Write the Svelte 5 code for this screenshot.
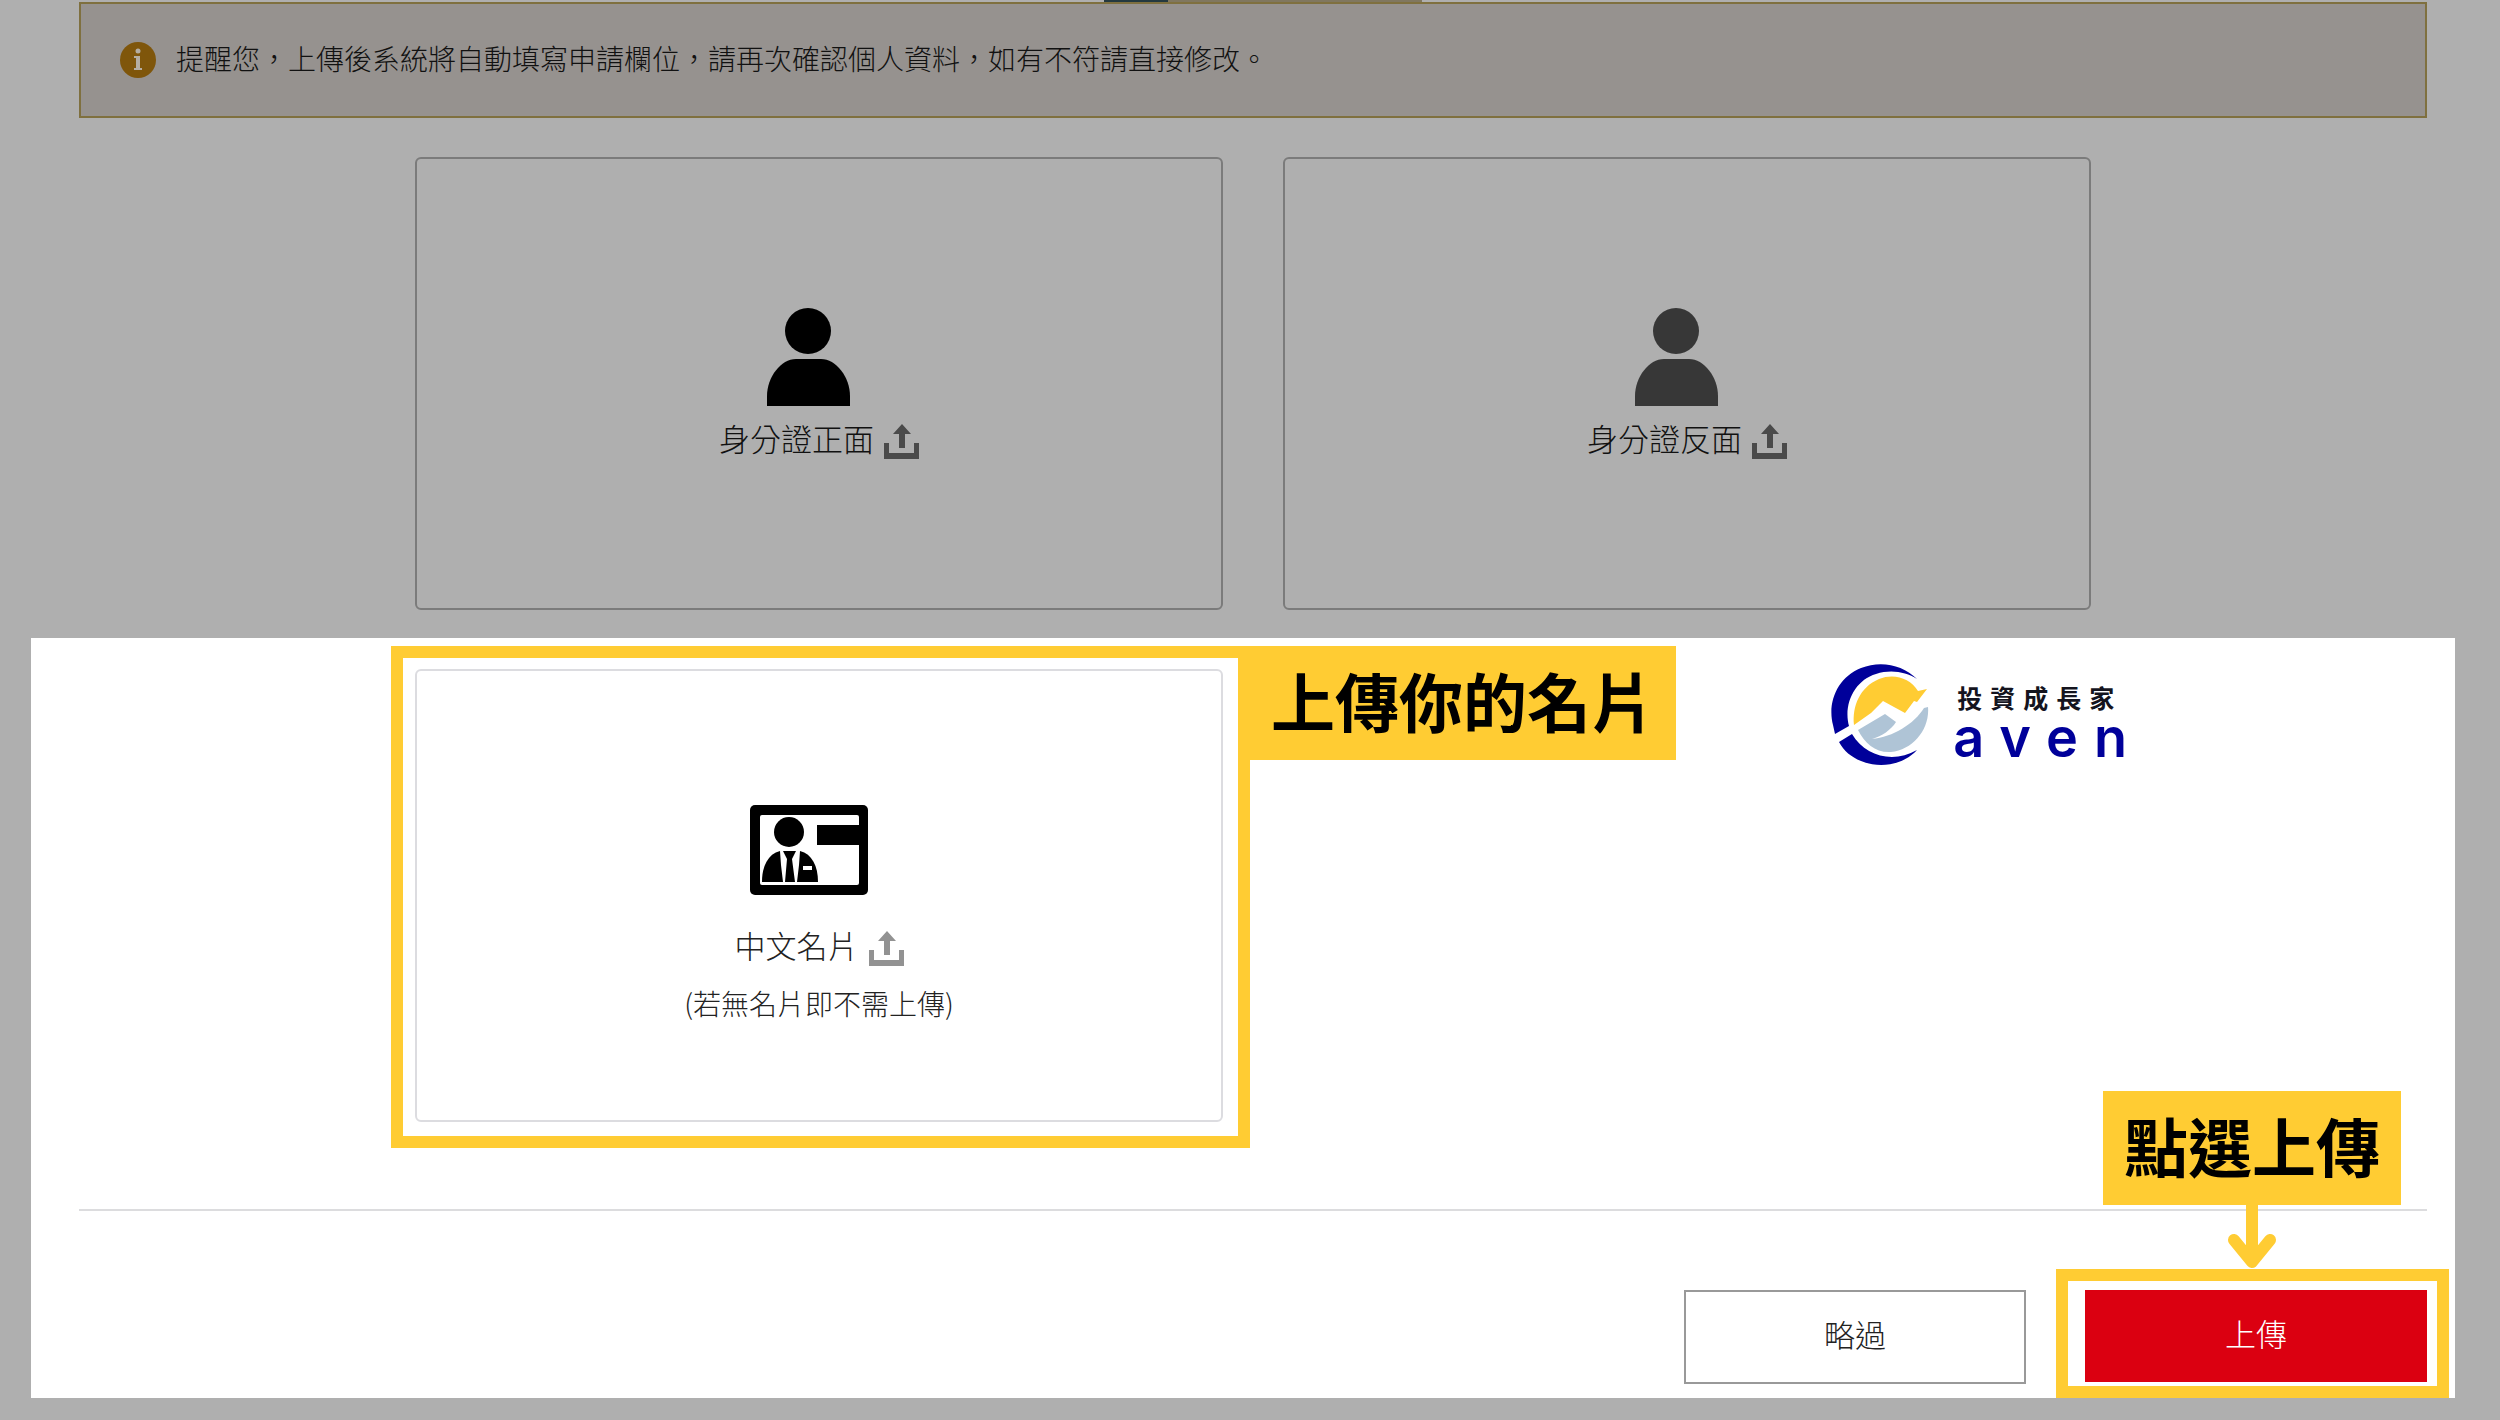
<script>
    let idCards = $state([
        { id: 'front', label: '身分證正面', color: '#000000' },
        { id: 'back', label: '身分證反面', color: '#373737' }
    ]);
</script>

{#snippet uploadIcon()}
    <svg class="upload-icon" viewBox="0 0 35 35" aria-hidden="true">
        <path d="M18 0 L27 10 H21 V24 H15 V10 H9 Z" />
        <path d="M0 19 H5 V29 H30 V19 H35 V35 H0 Z" />
    </svg>
{/snippet}

<main>
    <div class="steps">
        <span class="step active"></span>
        <span class="step"></span>
    </div>

    <div class="notice">
        <svg class="info-icon" viewBox="0 0 36 36" aria-hidden="true">
            <circle cx="18" cy="18" r="18" fill="#7f560b" />
            <circle cx="18" cy="9" r="2.5" fill="#b5aea3" />
            <path d="M14 14 H20 V26 H22 V28 H14 V26 H16 V16 H14 Z" fill="#b5aea3" />
        </svg>
        <p>提醒您，上傳後系統將自動填寫申請欄位，請再次確認個人資料，如有不符請直接修改。</p>
    </div>

    <div class="card-grid dimmed">
        {#each idCards as card (card.id)}
            <button class="card" type="button">
                <svg class="person" viewBox="0 0 104 98" fill={card.color} aria-hidden="true">
                    <circle cx="41" cy="23" r="23" />
                    <path d="M0 98 V88 C0 69 14 51 29 51 H54 C69 51 83 69 83 88 V98 Z" />
                </svg>
                <span class="card-label"><span>{card.label}</span>{@render uploadIcon()}</span>
            </button>
        {/each}
    </div>

    <section class="spotlight">
        <div class="card-grid">
            <div class="highlight">
                <button class="card business" type="button">
                    <svg class="namecard" viewBox="0 0 138 90" aria-hidden="true">
                        <rect width="118" height="90" rx="5" />
                        <rect x="10" y="10" width="99" height="70" rx="2" fill="#fff" />
                        <rect x="67" y="20" width="43" height="20" />
                        <circle cx="39" cy="27" r="15" />
                        <path d="M12 77 C12 61 18 49 30 46 L31 60 L33 77 Z" />
                        <path d="M68 77 C68 61 62 49 50 46 L49 60 L47 77 Z" />
                        <path d="M33 46 H46 L42 54 L45 77 H35 L37 54 Z" />
                        <rect x="53" y="61" width="9" height="4" fill="#fff" />
                    </svg>
                    <span class="card-label"><span>中文名片</span>{@render uploadIcon()}</span>
                    <span class="card-note">(若無名片即不需上傳)</span>
                </button>
                <span class="frame card-frame"></span>
                <strong class="callout card-callout">上傳你的名片</strong>
            </div>
        </div>

        <div class="brand">
            <svg class="brand-mark" viewBox="0 0 98 102" aria-hidden="true">
                <path fill="#00009a" d="M86 15 C72 1 50 -4 30 4 C7 13 -4 38 2 61 L4 70 L18 62 C12 40 24 16 45 10 C60 5 75 8 86 15 Z" />
                <path fill="#00009a" d="M8 78 L21 70 C34 92 62 100 86 86 C72 101 49 105 30 97 C20 93 13 87 8 78 Z" />
                <path fill="#fc3" d="M23 61 C21 42 29 23 48 15 C63 9 79 14 87 27 L96 25 L86 38 L83 37 L74 49 L52 37 L40 49 Z" />
                <path fill="#afc4d6" d="M27 66 L54 50 L65 58 C60 66 51 72 41 75 C62 73 83 60 93 44 L97 43 C99 65 82 86 60 88 C45 89 34 80 27 66 Z" />
            </svg>
            <div class="brand-text">
                <span class="brand-zh">投資成長家</span>
                <span class="brand-en">aven</span>
            </div>
        </div>

        <hr />

        <div class="actions">
            <button class="btn skip" type="button">略過</button>
            <div class="highlight">
                <button class="btn submit" type="button">上傳</button>
                <span class="frame submit-frame"></span>
                <div class="pointer">
                    <strong class="callout">點選上傳</strong>
                    <svg class="arrow" viewBox="0 0 50 64" aria-hidden="true">
                        <path d="M25 0 V54 M7 35 L25 57 L43 35" />
                    </svg>
                </div>
            </div>
        </div>
    </section>
</main>

<style>
    :global(body) { margin: 0; background: #afafaf; color: #111; font-family: "Noto Sans CJK TC", sans-serif; font-weight: 300; }
    button { font: inherit; color: inherit; cursor: pointer; }
    svg { display: block; flex: none; }

    .steps { display: flex; justify-content: center; height: 2px; margin: 0 73px 0 99px; }
    .step { width: 254px; background: #80775f; }
    .step.active { width: 64px; background: #24393f; }

    .notice { display: flex; align-items: flex-start; gap: 20px; box-sizing: border-box; height: 116px; margin: 0 73px 0 79px; padding: 38px 39px 0; border: 2px solid #7f703f; background: #96928f; }
    .notice p { margin: 0; font-size: 28px; line-height: 32px; }
    .info-icon { width: 36px; height: 36px; }

    .card-grid { display: grid; grid-template-columns: 1fr 1fr; gap: 60px; max-width: 1676px; margin: 0 auto; }
    .card-grid.dimmed { padding: 39px 73px 28px 79px; }
    .card { display: flex; flex-direction: column; align-items: center; box-sizing: border-box; width: 100%; min-height: 453px; padding: 149px 0 0; border: 2px solid #7b7b7b; border-radius: 6px; background: none; }
    .card.business { padding-top: 134px; border-color: #dcdce0; color: #222; }
    .card-label { display: flex; align-items: center; gap: 10px; margin-top: 12px; font-size: 31px; line-height: 40px; }
    .card-label span { padding-bottom: 6px; }
    .business .card-label { margin-top: 30px; }
    .card-note { margin-top: 15px; font-size: 28px; line-height: 34px; }
    .person { width: 104px; height: 98px; }
    .namecard { width: 138px; height: 90px; }
    .upload-icon { width: 35px; height: 35px; fill: #4a4a4a; }
    .business .upload-icon { fill: #929292; }

    .spotlight { position: relative; margin: 0 45px 22px 31px; padding: 31px 28px 14px 48px; background: #fff; }
    .spotlight hr { height: 2px; margin: 87px 0 79px; border: 0; background: #dcdcde; }

    .highlight { position: relative; }
    .frame { position: absolute; border: 12px solid #fc3; pointer-events: none; }
    .card-frame { inset: -23px -27px -26px -24px; }
    .submit-frame { inset: -21px -22px -16px -29px; }
    .callout { display: block; padding: 0 21px 8px; background: #fc3; color: #000; font-size: 64px; font-weight: 700; line-height: 106px; white-space: nowrap; }
    .card-callout { position: absolute; top: -23px; left: calc(100% + 27px); }
    .pointer { position: absolute; bottom: 113px; left: 18px; display: flex; flex-direction: column; align-items: center; }
    .arrow { width: 50px; height: 64px; fill: none; stroke: #fc3; stroke-width: 12px; stroke-linecap: round; stroke-linejoin: round; }

    .brand { position: absolute; top: 26px; right: 312px; display: flex; gap: 24px; }
    .brand-mark { width: 98px; height: 102px; }
    .brand-text { display: flex; flex-direction: column; padding-top: 17px; }
    .brand-zh { padding-left: 4px; color: #14141e; font-size: 25px; font-weight: 700; line-height: 32px; letter-spacing: 8px; }
    .brand-en { color: #00009a; font-family: Inter, sans-serif; font-size: 54px; font-weight: 600; line-height: 50px; letter-spacing: 16px; }

    .actions { display: flex; justify-content: flex-end; align-items: flex-start; gap: 59px; }
    .btn { width: 342px; height: 94px; padding: 0 0 8px; border: 2px solid #999; background: #fff; color: #222; font-size: 31px; }
    .btn.submit { display: block; height: 92px; border: 0; background: #db0011; color: #fff; }
</style>
